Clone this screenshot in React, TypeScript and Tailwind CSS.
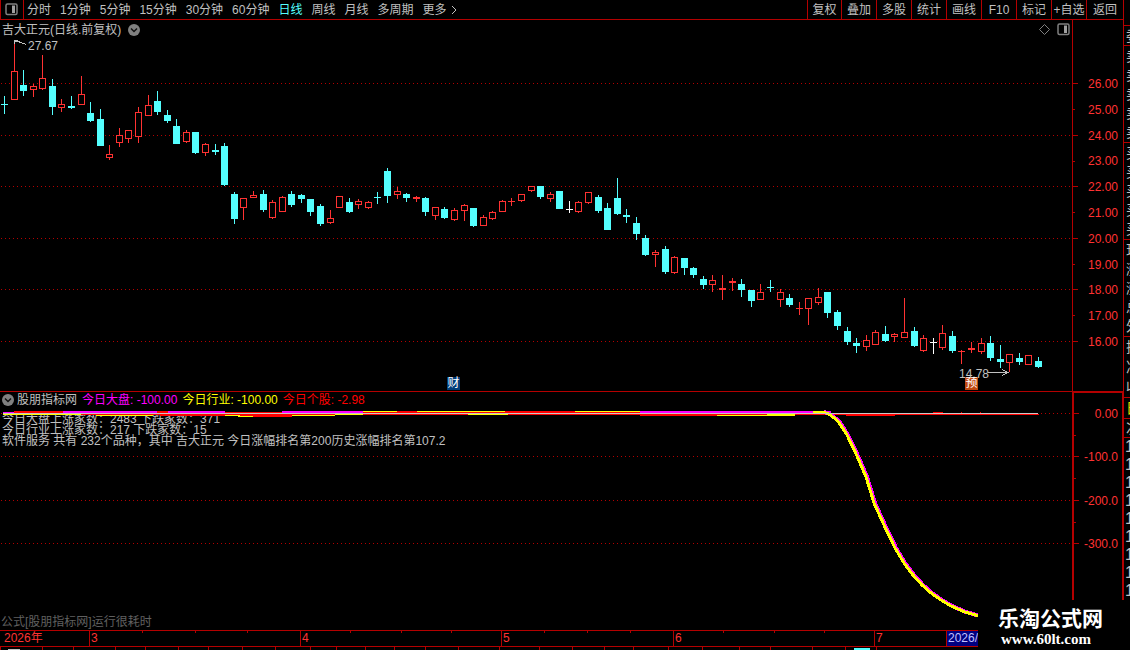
import type { ReactNode } from 'react';

const PLOT_WIDTH = 1072;

const PERIODS = ['分时', '1分钟', '5分钟', '15分钟', '30分钟', '60分钟', '日线', '周线', '月线', '多周期'];
const ACTIONS = ['叠加', '多股', '统计', '画线', 'F10', '标记', '+自选'];

const PRICE_LABELS = [26, 25, 24, 23, 22, 21, 20, 19, 18, 17, 16];
const PRICE_GRID = [83, 135, 186, 238, 289, 341];
const PRICE_MINOR = [109, 161, 212, 264, 315];

const INDICATOR_LABELS = ['0.00', '-100.0', '-200.0', '-300.0'];
const INDICATOR_GRID = [413, 456, 500, 543];
const INDICATOR_MINOR = [435, 478, 522];

type Kind = 'u' | 'd' | 'w';
// high, body top, body bottom, low, kind (up / down / flat)
type Candle = [number, number, number, number, Kind];

const CANDLES: Candle[] = [
  [96, 104, 105, 114, 'd'], [42, 71, 100, 100, 'u'], [70, 85, 91, 96, 'd'], [84, 86, 90, 97, 'u'],
  [55, 78, 89, 90, 'u'], [79, 86, 107, 115, 'd'], [99, 104, 108, 112, 'u'], [96, 106, 108, 109, 'd'],
  [76, 94, 105, 105, 'u'], [102, 113, 121, 122, 'd'], [109, 119, 146, 146, 'd'], [145, 154, 158, 160, 'u'],
  [128, 135, 143, 147, 'u'], [130, 130, 139, 143, 'u'], [107, 112, 137, 143, 'u'], [95, 105, 116, 116, 'u'],
  [91, 101, 112, 115, 'd'], [110, 115, 121, 123, 'd'], [119, 126, 144, 144, 'd'], [130, 132, 142, 143, 'u'],
  [132, 132, 153, 154, 'd'], [143, 144, 153, 156, 'u'], [144, 150, 152, 155, 'd'], [143, 146, 185, 186, 'd'],
  [192, 194, 219, 224, 'd'], [198, 198, 208, 220, 'u'], [191, 195, 198, 198, 'u'], [190, 194, 210, 212, 'd'],
  [200, 202, 218, 219, 'u'], [196, 197, 212, 212, 'u'], [191, 194, 205, 207, 'd'], [194, 195, 199, 203, 'd'],
  [199, 199, 212, 216, 'd'], [204, 206, 224, 226, 'd'], [210, 218, 223, 224, 'u'], [196, 196, 208, 208, 'u'],
  [198, 202, 212, 213, 'd'], [199, 201, 205, 209, 'u'], [201, 202, 208, 209, 'u'], [192, 197, 198, 204, 'd'],
  [168, 171, 196, 203, 'd'], [187, 191, 195, 199, 'u'], [193, 194, 198, 202, 'd'], [196, 197, 199, 202, 'u'],
  [197, 198, 212, 216, 'd'], [207, 207, 216, 220, 'u'], [207, 209, 218, 219, 'd'], [208, 210, 220, 221, 'u'],
  [204, 205, 211, 221, 'u'], [208, 208, 226, 227, 'd'], [215, 217, 226, 226, 'u'], [211, 212, 219, 220, 'u'],
  [200, 201, 212, 212, 'u'], [198, 201, 202, 206, 'u'], [194, 194, 201, 202, 'u'], [186, 186, 191, 192, 'u'],
  [186, 186, 197, 199, 'd'], [192, 194, 199, 202, 'u'], [191, 191, 209, 209, 'd'], [201, 209, 210, 213, 'w'],
  [201, 202, 212, 213, 'u'], [192, 192, 203, 204, 'u'], [195, 197, 211, 213, 'd'], [203, 208, 230, 230, 'd'],
  [178, 198, 214, 215, 'd'], [209, 215, 217, 223, 'd'], [217, 223, 234, 240, 'd'], [235, 238, 255, 256, 'd'],
  [250, 252, 255, 267, 'u'], [246, 249, 272, 274, 'd'], [256, 257, 273, 274, 'u'], [258, 258, 268, 275, 'd'],
  [267, 268, 275, 278, 'd'], [276, 279, 285, 289, 'd'], [275, 280, 285, 292, 'u'], [275, 288, 290, 300, 'u'],
  [278, 281, 283, 291, 'u'], [279, 284, 290, 297, 'd'], [290, 290, 301, 307, 'd'], [284, 292, 300, 300, 'u'],
  [280, 287, 288, 292, 'd'], [289, 292, 300, 307, 'u'], [294, 298, 305, 307, 'd'], [302, 308, 309, 315, 'u'],
  [298, 298, 309, 325, 'u'], [288, 297, 303, 305, 'u'], [292, 292, 313, 318, 'd'], [310, 312, 326, 330, 'd'],
  [327, 331, 342, 345, 'd'], [338, 343, 346, 353, 'd'], [335, 340, 347, 351, 'u'], [330, 332, 345, 345, 'u'],
  [326, 334, 341, 342, 'd'], [333, 334, 337, 342, 'u'], [298, 332, 338, 338, 'u'], [327, 331, 346, 347, 'd'],
  [335, 338, 351, 352, 'u'], [338, 342, 343, 354, 'w'], [325, 333, 348, 350, 'u'], [331, 336, 351, 353, 'd'],
  [350, 351, 352, 364, 'u'], [342, 348, 350, 353, 'u'], [338, 343, 352, 354, 'u'], [336, 343, 358, 361, 'd'],
  [345, 359, 362, 368, 'd'], [354, 354, 363, 372, 'u'], [353, 358, 362, 365, 'd'], [355, 355, 365, 365, 'u'],
  [357, 361, 367, 368, 'd'],
];

const CANDLE_COLOR: Record<Kind, string> = { u: '#ff3232', d: '#54ffff', w: '#ffffff' };

// x, y, width, height, colour of the flat pieces around the zero line
const ZERO_SEGMENTS: [number, number, number, number, string][] = [
  [3, 412, 828, 1, '#ff0000'],
  [3, 414, 1036, 1, '#ff0000'],
  [14, 411, 49, 1, '#ff0000'],
  [3, 412, 11, 2, '#ff00ff'],
  [63, 411, 94, 2, '#ff00ff'],
  [157, 411, 11, 2, '#ff0000'],
  [168, 411, 57, 2, '#ff00ff'],
  [282, 411, 81, 2, '#ff00ff'],
  [363, 411, 34, 1, '#ffff00'],
  [397, 411, 20, 1, '#ff0000'],
  [417, 411, 88, 1, '#ffff00'],
  [505, 411, 70, 1, '#ff0000'],
  [575, 411, 65, 1, '#ffff00'],
  [640, 411, 191, 2, '#ff00ff'],
  [813, 411, 10, 2, '#ffff00'],
  [933, 412, 10, 1, '#ff0000'],
  [961, 412, 1, 1, '#ff0000'],
  [980, 412, 1, 1, '#ff0000'],
  [3, 414, 78, 1, '#ffff00'],
  [96, 415, 57, 1, '#ffff00'],
  [160, 415, 65, 1, '#ff0000'],
  [225, 415, 15, 1, '#ffff00'],
  [240, 415, 52, 2, '#ff0000'],
  [238, 416, 15, 1, '#ffff00'],
  [292, 415, 43, 1, '#ffff00'],
  [335, 414, 28, 1, '#ffff00'],
  [468, 414, 40, 1, '#ffff00'],
  [640, 415, 77, 1, '#ff0000'],
  [717, 415, 50, 1, '#ffff00'],
  [767, 414, 28, 2, '#ffff00'],
  [846, 414, 49, 2, '#ff0000'],
];

const CURVE =
  'M823 412L829 414L838 421L847 435L857 456L866 477L874 503L883 523L895 548L904 563L913 575L922 585L931 593L941 600L951 606L965 612L979 616';

const MONTHS = ['3', '4', '5', '6'];

const TAB_EDGES = [
  0, 42, 73, 115, 144, 177, 207, 241, 274, 308, 334, 363, 391, 422, 455, 496, 536, 569, 600, 629, 664, 698,
  735, 765, 807, 840, 871, 1123,
];

function PanelIcon({ className }: { className?: string }) {
  return (
    <svg className={className} width="13" height="13" viewBox="0 0 13 13" aria-hidden="true">
      <rect x="1" y="1" width="11" height="10.5" rx="1.5" fill="none" stroke="#808080" strokeWidth="1.5" />
      <rect x="7" y="2.5" width="3" height="7.5" fill="#a0a0a0" />
    </svg>
  );
}

function ChevronBadge() {
  return (
    <svg width="12" height="12" viewBox="0 0 12 12" aria-hidden="true">
      <circle cx="6" cy="6" r="6" fill="#808080" />
      <path d="M3 4.5L6 7.5L9 4.5" fill="none" stroke="#101010" strokeWidth="1.5" />
    </svg>
  );
}

function Toolbar() {
  return (
    <header className="flex h-5 border-b border-[#b40000] text-[#c0c0c0]">
      <button type="button" aria-label="切换面板" className="flex w-6 shrink-0 items-center border-x border-[#b40000] pl-1">
        <PanelIcon />
      </button>
      <nav className="flex items-center gap-[9px] pl-[3px]">
        {PERIODS.map((period) => (
          <button
            key={period}
            type="button"
            className={period === '日线' ? 'text-[#54ffff]' : 'hover:text-white'}
          >
            {period}
          </button>
        ))}
        <button type="button" className="flex items-center gap-1 hover:text-white">
          更多
          <svg width="6" height="10" viewBox="0 0 6 10" fill="none" stroke="currentColor" aria-hidden="true">
            <path d="M1 1L5 5L1 9" />
          </svg>
        </button>
      </nav>
      <div className="ml-auto flex">
        <button type="button" className="w-[34px] border-l border-[#b40000] hover:text-white">
          复权
        </button>
        {ACTIONS.map((action) => (
          <button key={action} type="button" className="w-[35px] border-l border-[#b40000] hover:text-white">
            {action}
          </button>
        ))}
        <button type="button" className="w-[37px] border-l border-[#b40000] hover:text-white">
          返回
        </button>
      </div>
    </header>
  );
}

function GridLines({ rows }: { rows: number[] }) {
  return (
    <>
      {rows.map((y) => (
        <path key={y} d={`M1 ${y + 0.5}H1072`} stroke="#b40000" strokeDasharray="1 3" />
      ))}
    </>
  );
}

function AxisTicks({ major, minor, viewBox }: { major: number[]; minor: number[]; viewBox: string }) {
  return (
    <svg className="h-full w-[5px] shrink-0" viewBox={viewBox} preserveAspectRatio="none" stroke="#b40000" shapeRendering="crispEdges">
      {major.map((y) => (
        <path key={y} d={`M0 ${y + 0.5}H5`} />
      ))}
      {minor.map((y) => (
        <path key={y} d={`M0 ${y + 0.5}H2`} />
      ))}
    </svg>
  );
}

function Marker({ x, className, children }: { x: number; className: string; children: ReactNode }) {
  return (
    <span className={`absolute ${className}`} style={{ left: `${(x / PLOT_WIDTH) * 100}%` }}>
      {children}
    </span>
  );
}

function CandleShape({ candle, index }: { candle: Candle; index: number }) {
  const [high, top, bottom, low, kind] = candle;
  const x = Math.round(4 + (index * 1034) / 108);
  const color = CANDLE_COLOR[kind];
  const hollow = kind === 'u' && bottom - top > 2;

  return (
    <g fill={color}>
      <rect x={x} y={high} width="1" height={low - high} />
      {hollow ? (
        <rect x={x - 2.5} y={top + 0.5} width="6" height={bottom - top - 1} fill="#000000" stroke={color} />
      ) : (
        <rect x={x - 3} y={top} width="7" height={bottom - top} />
      )}
    </g>
  );
}

function PricePanel() {
  return (
    <section className="flex h-[372px] border-b border-[#b40000]">
      <div className="relative min-w-0 flex-1">
        <svg className="block h-full w-full" viewBox="0 20 1072 371" preserveAspectRatio="none" shapeRendering="crispEdges">
          <GridLines rows={PRICE_GRID} />
          {CANDLES.map((candle, i) => (
            <CandleShape key={i} candle={candle} index={i} />
          ))}
          <path d="M14.5 44V40.5H18M15 41.5H18L21 42.5L26 44.5" fill="none" stroke="#c0c0c0" />
          <path d="M988 372.5H1008M1002 369.5L1008 372.5L1002 375.5" fill="none" stroke="#c0c0c0" />
        </svg>
        <div className="absolute inset-x-0 top-0 flex h-[19px] items-center pl-0.5 pr-0.5 text-[#c0c0c0]">
          <h1>吉大正元(日线.前复权)</h1>
          <button type="button" aria-label="选项" className="ml-[7px]">
            <ChevronBadge />
          </button>
          <svg className="ml-auto mr-[7px]" width="11" height="11" viewBox="0 0 11 11" fill="none" stroke="#808080" aria-hidden="true">
            <path d="M5.5 0.5L10.5 5.5L5.5 10.5L0.5 5.5Z" />
          </svg>
          <PanelIcon />
        </div>
        <Marker x={28} className="top-[18px] text-[#c0c0c0]">27.67</Marker>
        <Marker x={959} className="top-[346px] text-[#c0c0c0]">14.78</Marker>
        <Marker x={447} className="top-[357px] h-[13px] w-[13px] bg-[#003c78] text-center leading-[13px] text-white">
          财
        </Marker>
        <Marker x={965} className="top-[357px] h-[13px] w-[13px] bg-[#c04810] text-center leading-[13px] text-white">
          预
        </Marker>
      </div>
      <div className="flex w-[51px] border-l border-[#b40000] text-[#ff3232]">
        <AxisTicks major={PRICE_GRID} minor={PRICE_MINOR} viewBox="0 20 5 371" />
        <ol className="mt-[56px] flex h-[274px] flex-1 flex-col justify-between pr-[5px] text-right">
          {PRICE_LABELS.map((price) => (
            <li key={price}>{price.toFixed(2)}</li>
          ))}
        </ol>
      </div>
    </section>
  );
}

function IndicatorPanel() {
  return (
    <section className="flex h-[239px] border-b border-[#b40000]">
      <div className="relative min-w-0 flex-1">
        <div className="absolute left-0.5 top-[22px] whitespace-nowrap leading-[11px] text-[#c0c0c0]">
          <p>今日大盘上涨家数：2483 下跌家数：371</p>
          <p>今日行业上涨家数：217 下跌家数：15</p>
          <p>软件服务 共有 232个品种，其中 吉大正元 今日涨幅排名第200历史涨幅排名第107.2</p>
        </div>
        <svg className="relative block h-full w-full" viewBox="0 392 1072 238" preserveAspectRatio="none" shapeRendering="crispEdges">
          <GridLines rows={INDICATOR_GRID} />
          {ZERO_SEGMENTS.map(([x, y, width, height, color], i) => (
            <rect key={i} x={x} y={y} width={width} height={height} fill={color} />
          ))}
          <path d={CURVE} transform="translate(1 0)" fill="none" stroke="#ff00ff" strokeWidth="4" />
          <path d={CURVE} fill="none" stroke="#ffff00" strokeWidth="3" />
          <rect x="3" y="413" width="1035" height="1" fill="#c8c8c8" />
        </svg>
        <div className="absolute inset-x-0 top-0 flex h-4 items-center gap-[5px] whitespace-nowrap pl-0.5">
          <button type="button" aria-label="指标选项" className="-mr-0.5">
            <ChevronBadge />
          </button>
          <h2 className="text-[#c0c0c0]">股朋指标网</h2>
          <span className="text-[#ff00ff]">今日大盘: -100.00</span>
          <span className="text-[#ffff00]">今日行业: -100.00</span>
          <span className="text-[#ff0000]">今日个股: -2.98</span>
        </div>
        <p className="absolute bottom-0 left-px text-[#606060]">公式[股朋指标网]运行很耗时</p>
      </div>
      <div className="flex w-[51px] border-l-2 border-r border-t border-[#b40000] text-[#ff3232]">
        <AxisTicks major={INDICATOR_GRID} minor={INDICATOR_MINOR} viewBox="0 393 5 237" />
        <ol className="mt-[13px] flex h-[146px] flex-1 flex-col justify-between pr-1 text-right">
          {INDICATOR_LABELS.map((label) => (
            <li key={label}>{label}</li>
          ))}
        </ol>
      </div>
    </section>
  );
}

function TimeAxis() {
  return (
    <div className="grid h-4 grid-cols-[89fr_211fr_201fr_172fr_201fr_72fr_177fr] border-b border-[#b40000] leading-[15px] text-[#ff3232]">
      <span className="pl-1">2026年</span>
      {MONTHS.map((month) => (
        <span key={month} className="relative border-l border-[#b40000] pl-px">
          {month}
          <span className="absolute inset-x-0 top-0 flex justify-evenly">
            <i className="h-0.5 w-px bg-[#b40000]" />
            <i className="h-0.5 w-px bg-[#b40000]" />
            <i className="h-0.5 w-px bg-[#b40000]" />
          </span>
        </span>
      ))}
      <span className="border-l border-[#b40000] pl-px">7</span>
      <span className="border-l border-[#b40000] bg-[#000080] pl-px text-[#c0c0ff]">2026/</span>
    </div>
  );
}

function TabStrip() {
  return (
    <div className="flex h-[3px]">
      {TAB_EDGES.slice(1).map((edge, i) => (
        <span
          key={edge}
          className="flex items-end border-l border-[#b40000]"
          style={{ flexGrow: edge - TAB_EDGES[i], flexBasis: 0 }}
        >
          {i === 0 && <i className="ml-[7px] h-px w-3 bg-[#c0c0c0]" />}
          {i === 25 && <i className="ml-2 h-0.5 w-4 bg-[#54ffff]" />}
        </span>
      ))}
    </div>
  );
}

function QuoteGroup({ rows, className }: { rows: string[]; className: string }) {
  return (
    <div className={`flex flex-col justify-around border-b border-[#b40000] pl-0.5 text-sm leading-4 ${className}`}>
      {rows.map((row, i) => (
        <span key={i} className="whitespace-nowrap">
          {row}
        </span>
      ))}
    </div>
  );
}

function QuoteSidebar() {
  return (
    <aside className="w-[7px] shrink-0 overflow-hidden border-l border-[#b40000] text-[#c0c0c0]">
      <QuoteGroup rows={[]} className="h-[26px]" />
      <QuoteGroup rows={['委']} className="h-5" />
      <QuoteGroup rows={['卖', '卖', '卖', '卖', '卖']} className="h-[97px]" />
      <QuoteGroup rows={['买', '买', '买', '买', '买']} className="h-[97px]" />
      <QuoteGroup rows={['现', '涨', '涨', '总', '外']} className="h-[97px]" />
      <QuoteGroup rows={['换', '净', '收']} className="h-[61px]" />
      <QuoteGroup rows={['日']} className="h-[21px] text-[#e0e000]" />
      <QuoteGroup rows={['次']} className="h-[19px]" />
      {Array.from({ length: 9 }, (_, i) => (
        <p key={i} className="h-[18px] pl-px text-base leading-[18px]">
          1
        </p>
      ))}
    </aside>
  );
}

export default function App() {
  return (
    <div className="relative flex min-h-screen overflow-hidden bg-black font-['Liberation_Sans','Noto_Sans_CJK_SC',sans-serif] text-[12px] leading-4">
      <main className="min-w-0 flex-1">
        <Toolbar />
        <PricePanel />
        <IndicatorPanel />
        <TimeAxis />
        <TabStrip />
      </main>
      <QuoteSidebar />
      <div className="absolute bottom-0 right-0 flex h-[50px] w-[152px] flex-col bg-black pl-5 pt-[7px] text-white">
        <strong className="text-[21px] leading-6">乐淘公式网</strong>
        <a href="#" className="pl-[3px] font-['Liberation_Serif',serif] text-[15px] font-bold leading-4">
          www.60lt.com
        </a>
      </div>
    </div>
  );
}
